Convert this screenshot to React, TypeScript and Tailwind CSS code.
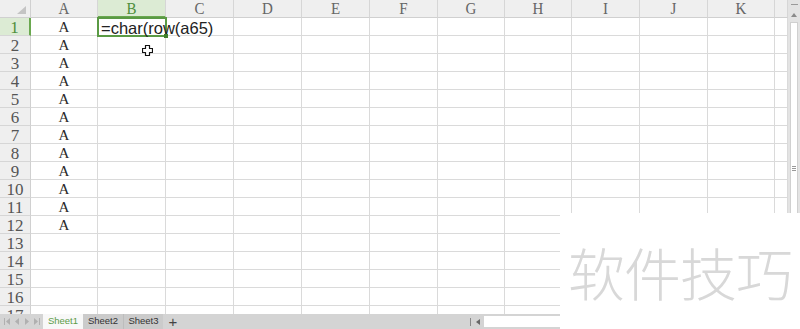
import React from "react";

const cols = [
  { label: "A", w: 67 },
  { label: "B", w: 68 },
  { label: "C", w: 68 },
  { label: "D", w: 68 },
  { label: "E", w: 68 },
  { label: "F", w: 68 },
  { label: "G", w: 67 },
  { label: "H", w: 67 },
  { label: "I", w: 68 },
  { label: "J", w: 68 },
  { label: "K", w: 67 },
  { label: "", w: 13 },
];

const rows = Array.from({ length: 17 }, (_, i) => i + 1);

const serif = { fontFamily: '"Liberation Serif", "Noto Sans CJK SC", serif' };

const Cursor: React.FC = () => (
  <svg width="11" height="11" viewBox="0 0 11 11" className="absolute left-[142px] top-[45px] z-20">
    <path
      d="M3.5 0.5h4v3h3v4h-3v3h-4v-3h-3v-4h3z"
      fill="#fff"
      stroke="#111"
      strokeWidth="1.2"
      strokeLinejoin="round"
    />
  </svg>
);

const Grid: React.FC = () => (
  <div className="relative flex-1 overflow-hidden bg-white">
    {/* header row */}
    <div className="flex h-[18px]">
      <div className="relative w-[31px] shrink-0 bg-[#efefef] border-r border-b border-[#d0d0d0]">
        <svg width="9" height="8" viewBox="0 0 9 8" className="absolute right-[4px] bottom-[3px]">
          <path d="M9 0 L9 8 L0 8 Z" fill="#c4c4c4" />
        </svg>
      </div>
      {cols.map((c) => (
        <div
          key={c.label + c.w}
          style={{ width: c.w, ...serif }}
          className={`shrink-0 flex items-center justify-center pt-[2px] text-[15px] leading-none border-r border-[#d6d6d6] ${
            c.label === "B"
              ? "bg-[#dcebd4] text-[#4f8f3c] border-b-2 border-b-[#6aa84f]"
              : "bg-[#efefef] text-[#666] border-b border-b-[#d0d0d0]"
          }`}
        >
          <span className="scale-y-110">{c.label}</span>
        </div>
      ))}
    </div>

    {rows.map((r) => (
      <div key={r} className="flex h-[18px]">
        <div
          style={serif}
          className={`w-[31px] shrink-0 flex items-center justify-center pt-[2px] text-[17px] leading-none border-b border-[#d6d6d6] ${
            r === 1
              ? "bg-[#dcebd4] text-[#4f8f3c] border-r-2 border-r-[#6aa84f]"
              : "bg-[#efefef] text-[#555] border-r border-r-[#d0d0d0]"
          }`}
        >
          {r}
        </div>
        {cols.map((c, ci) => (
          <div
            key={ci}
            style={{ width: c.w, ...serif }}
            className="shrink-0 flex items-center justify-center pt-[1px] text-[15px] text-[#2a2a2a] border-r border-b border-[#dadada]"
          >
            {ci === 0 && r <= 12 ? "A" : ""}
          </div>
        ))}
      </div>
    ))}

    {/* selected cell B1 */}
    <div className="absolute left-[97px] top-[17px] w-[70px] h-[20px] border-2 border-[#5a9a44] z-10">
      <span
        className="absolute left-[2px] top-[-1px] whitespace-nowrap text-[16.5px] text-[#222] leading-[20px]"
        style={{ fontFamily: '"Liberation Sans", Arial, sans-serif' }}
      >
        =char(row(a65)
      </span>
      <div className="absolute right-[-3px] bottom-[-3px] w-[4px] h-[4px] bg-[#3f7f2c]" />
    </div>
    <Cursor />
  </div>
);

const VScroll: React.FC = () => (
  <div className="w-[12px] shrink-0 bg-[#e3e3e3] flex flex-col items-center">
    <div className="mt-[4px] w-[7px] h-px bg-[#9a9a9a]" />
    <svg width="6" height="4" viewBox="0 0 6 4" className="mt-[8px]">
      <path d="M0 4 L3 0 L6 4 Z" fill="#8a8a8a" />
    </svg>
    <div className="mt-[5px] w-[8px] flex-1 bg-white border border-[#d0d0d0] flex flex-col items-center justify-center gap-[1px]">
      <div className="w-[4px] h-px bg-[#999]" />
      <div className="w-[4px] h-px bg-[#999]" />
      <div className="w-[4px] h-px bg-[#999]" />
    </div>
  </div>
);

const Arrow: React.FC<{ dir: "l" | "r"; bar?: boolean }> = ({ dir, bar }) => (
  <svg width="6" height="7" viewBox="0 0 6 7">
    {dir === "l" ? (
      <>
        {bar && <rect x="0" y="0" width="1" height="7" fill="#b0b0b0" />}
        <path d={bar ? "M6 0 L2 3.5 L6 7 Z" : "M5 0 L1 3.5 L5 7 Z"} fill="#b0b0b0" />
      </>
    ) : (
      <>
        <path d={bar ? "M0 0 L4 3.5 L0 7 Z" : "M1 0 L5 3.5 L1 7 Z"} fill="#b0b0b0" />
        {bar && <rect x="5" y="0" width="1" height="7" fill="#b0b0b0" />}
      </>
    )}
  </svg>
);

const TabBar: React.FC = () => (
  <div
    className="h-[15px] shrink-0 flex items-stretch bg-[#d4d4d4] text-[9.5px]"
    style={{ fontFamily: '"Liberation Sans", Arial, sans-serif' }}
  >
    <div className="w-[43px] flex items-center justify-center gap-[4px]">
      <Arrow dir="l" bar />
      <Arrow dir="l" />
      <Arrow dir="r" />
      <Arrow dir="r" bar />
    </div>
    <div className="w-[40px] bg-[#f8f8f8] text-[#5c9c48] flex items-center justify-center">Sheet1</div>
    <div className="w-[41px] bg-[#cbcbcb] text-[#333] flex items-center justify-center border-r border-[#bdbdbd]">
      Sheet2
    </div>
    <div className="w-[39px] bg-[#cbcbcb] text-[#333] flex items-center justify-center">Sheet3</div>
    <div className="w-[20px] flex items-center justify-center text-[15px] text-[#444] leading-none">+</div>
    <div className="flex-1" />
    <div className="flex items-center gap-[5px] pr-[4px]">
      <div className="w-px h-[8px] bg-[#888]" />
      <svg width="4" height="6" viewBox="0 0 4 6">
        <path d="M4 0 L0 3 L4 6 Z" fill="#666" />
      </svg>
    </div>
    <div className="w-[316px] my-[2px] bg-white" />
  </div>
);

export default function App() {
  return (
    <div className="relative w-[800px] h-[329px] overflow-hidden bg-white flex flex-col">
      <div className="flex h-[314px]">
        <Grid />
        <VScroll />
      </div>
      <TabBar />

      {/* watermark */}
      <div className="absolute left-[560px] top-[213px] right-0 bottom-0 bg-white flex items-center justify-center z-30">
        <span
          className="text-[57px] leading-none text-[#d8d8d8] tracking-[-1px]"
          style={{ fontFamily: '"Noto Sans CJK SC", sans-serif', fontWeight: 300 }}
        >
          软件技巧
        </span>
      </div>
    </div>
  );
}
